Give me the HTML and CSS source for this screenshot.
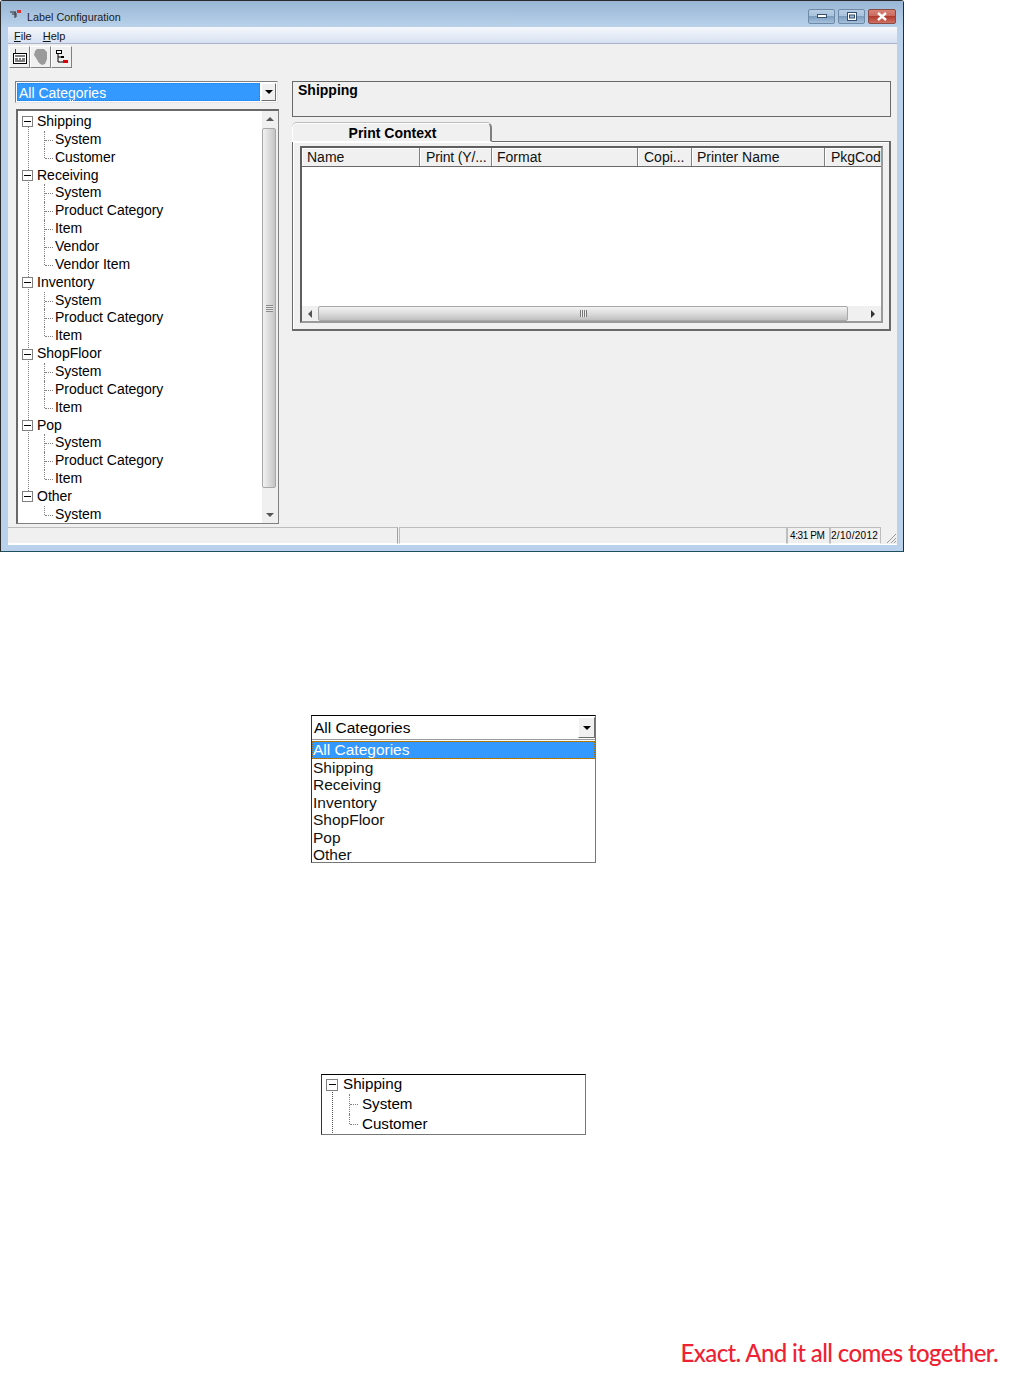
FILE: index.html
```html
<!DOCTYPE html>
<html lang="en">
<head>
  <meta charset="UTF-8" />
  <title>Label Configuration</title>
  <link rel="stylesheet" href="styles.css">
</head>
<body>
  <div class="window">
    <div class="titlebar">
      <svg class="app-icon" width="14" height="12" viewBox="0 0 14 12">
        <path d="M1 3h6M3 5h5M6 7h2M6 3v6" stroke="#333" fill="none"/>
        <path d="M8 1h4v3h-4z" fill="#d33"/>
      </svg>
      <span class="title">Label Configuration</span>
      <div class="win-buttons">
        <div class="win-btn">
          <svg width="10" height="5" viewBox="0 0 10 5"><rect x="0.5" y="0.5" width="9" height="3" fill="#fff" stroke="#35506e"/></svg>
        </div>
        <div class="win-btn">
          <svg width="10" height="9" viewBox="0 0 10 9"><rect x="0.5" y="0.5" width="9" height="8" fill="#fff" stroke="#35506e"/><rect x="2.5" y="3" width="5" height="3" fill="#9db9d6" stroke="#35506e"/></svg>
        </div>
        <div class="win-btn close">
          <svg width="12" height="9" viewBox="0 0 12 9"><path d="M2 1l8 7M10 1l-8 7" stroke="#fff" stroke-width="2.4"/></svg>
        </div>
      </div>
    </div>

    <div class="client">
      <div class="menubar"><span><u>F</u>ile</span><span><u>H</u>elp</span></div>

      <div class="toolbar">
        <div class="tool">
          <svg width="16" height="16" viewBox="0 0 16 16">
            <path d="M3.5 0v5h4" stroke="#d00" fill="none"/>
            <rect x="1.5" y="4.5" width="13" height="10" fill="#fff" stroke="#000"/>
            <path d="M3 7h10M3 10h3M7 10h2M10 10h3M3 12h10" stroke="#000" stroke-width="1.2"/>
          </svg>
        </div>
        <div class="tool">
          <svg width="16" height="18" viewBox="0 0 16 18">
            <path d="M4 1h7l3 3v7l-2 5-3 1-3-2-3-5-2-3 1-4z" fill="#9a9a9a"/>
          </svg>
        </div>
        <div class="tool">
          <svg width="16" height="16" viewBox="0 0 16 16">
            <path d="M4 3v10M4 8h4M4 13h5" stroke="#000"/>
            <rect x="2.5" y="1.5" width="5" height="3" fill="#fff" stroke="#000"/>
            <rect x="7" y="7" width="3" height="2" fill="#000"/>
            <rect x="9" y="11" width="5" height="3" fill="#d00"/>
          </svg>
        </div>
      </div>

      <div class="main">
        <div class="left">
          <div class="combo">
            <div class="combo-value">All Categories</div>
            <div class="arrow-btn"><i class="caret"></i></div>
          </div>
          <div class="tree-box">
            <ul class="tree">
              <li class="root"><div class="row"><i class="minus"></i>Shipping</div>
                <ul><li>System</li><li>Customer</li></ul></li>
              <li class="root"><div class="row"><i class="minus"></i>Receiving</div>
                <ul><li>System</li><li>Product Category</li><li>Item</li><li>Vendor</li><li>Vendor Item</li></ul></li>
              <li class="root"><div class="row"><i class="minus"></i>Inventory</div>
                <ul><li>System</li><li>Product Category</li><li>Item</li></ul></li>
              <li class="root"><div class="row"><i class="minus"></i>ShopFloor</div>
                <ul><li>System</li><li>Product Category</li><li>Item</li></ul></li>
              <li class="root"><div class="row"><i class="minus"></i>Pop</div>
                <ul><li>System</li><li>Product Category</li><li>Item</li></ul></li>
              <li class="root"><div class="row"><i class="minus"></i>Other</div>
                <ul><li>System</li></ul></li>
            </ul>
            <div class="vscroll">
              <div class="sb-btn"><i class="tri-up"></i></div>
              <div class="vthumb"><i class="grip-v"></i></div>
              <div class="sb-btn"><i class="tri-down"></i></div>
            </div>
          </div>
        </div>

        <div class="right">
          <div class="info-box">Shipping</div>
          <div class="tab-strip"><div class="tab">Print Context</div></div>
          <div class="tab-panel">
            <div class="listview">
              <div class="list-head">
                <div class="col c-name">Name</div>
                <div class="col c-print">Print (Y/...</div>
                <div class="col c-format">Format</div>
                <div class="col c-copies">Copi...</div>
                <div class="col c-printer">Printer Name</div>
                <div class="col c-pkg">PkgCod</div>
              </div>
              <div class="list-body"></div>
              <div class="hscroll">
                <div class="sb-btn"><i class="tri-left"></i></div>
                <div class="hthumb"><i class="grip-h"></i></div>
                <div class="sb-btn"><i class="tri-right"></i></div>
              </div>
            </div>
          </div>
        </div>
      </div>

      <div class="statusbar">
        <div class="panel p-a"></div>
        <div class="panel p-b"></div>
        <div class="panel p-time">4:31 PM</div>
        <div class="panel p-date">2/10/2012</div>
        <svg class="size-grip" width="12" height="12" viewBox="0 0 12 12">
          <path d="M11 2L2 11M11 6L6 11M11 9L9 11" stroke="#999" fill="none"/>
        </svg>
      </div>
    </div>
  </div>

  <div class="demo-combo">
    <div class="demo-top">
      <div class="demo-value">All Categories</div>
      <div class="arrow-btn"><i class="caret"></i></div>
    </div>
    <ul class="demo-list">
      <li class="selected">All Categories</li>
      <li>Shipping</li>
      <li>Receiving</li>
      <li>Inventory</li>
      <li>ShopFloor</li>
      <li>Pop</li>
      <li>Other</li>
    </ul>
  </div>

  <div class="demo-tree">
    <ul class="tree big">
      <li class="root"><div class="row"><i class="minus"></i>Shipping</div>
        <ul><li>System</li><li>Customer</li></ul></li>
    </ul>
  </div>

  <p class="tagline">Exact. And it all comes together.</p>
</body>
</html>
```

FILE: styles.css
```css
* {
  margin: 0;
  padding: 0;
  box-sizing: border-box;
}

body {
  background: #fff;
  color: #000;
  font-family: "Liberation Sans", Arial, sans-serif;
  font-size: 14px;
  width: 1010px;
  height: 1374px;
  overflow: hidden;
}

ul {
  list-style: none;
}

i {
  display: block;
}

/* window frame */
.window {
  width: 904px;
  height: 552px;
  background: #b9d1ea;
  border: 1px solid #2b2b2b;
  border-bottom-color: #1d4f5f;
  border-radius: 3px 3px 0 0;
  padding: 0 6px 6px 7px;
  display: flex;
  flex-direction: column;
}

.titlebar {
  height: 26px;
  margin: 0 -6px 0 -7px;
  padding: 0 7px 0 8px;
  display: flex;
  align-items: center;
  background: linear-gradient(#98b6d5, #b9d1ea);
  flex: none;
}

.app-icon {
  margin-right: 4px;
  margin-bottom: -1px;
}

.title {
  font-size: 10.8px;
  color: #1c1c1c;
  padding-top: 5px;
}

.win-buttons {
  margin-left: auto;
  display: flex;
  gap: 3px;
  align-self: flex-start;
  margin-top: 8px;
}

.win-btn {
  width: 27px;
  height: 15px;
  border: 1px solid #6f8aa6;
  border-radius: 2px;
  background: linear-gradient(#b7cde3 0, #a9c3de 45%, #7d9dbf 50%, #a5c0dc 100%);
  display: flex;
  align-items: center;
  justify-content: center;
}

.win-btn.close {
  width: 28px;
  background: linear-gradient(#d98377 0, #cc6a5f 45%, #b13b2e 50%, #cf6f62 100%);
  border-color: #8a4a44;
}

.client {
  flex: 1;
  background: #f0f0f0;
  display: flex;
  flex-direction: column;
  min-height: 0;
}

.menubar {
  height: 17px;
  background: linear-gradient(#f5f8fc, #d7e1f1);
  border-bottom: 1px solid #a9b4c8;
  font-size: 11px;
  display: flex;
  gap: 11px;
  padding: 3px 0 0 6px;
  color: #111;
  flex: none;
}

.toolbar {
  display: flex;
  padding: 2px 0 0 1px;
  height: 24px;
  flex: none;
}

.tool {
  width: 21px;
  height: 22px;
  background: #f0f0f0;
  border: 1px solid;
  border-color: #fff #808080 #808080 #fff;
  display: flex;
  align-items: center;
  justify-content: center;
}

.main {
  flex: 1;
  display: flex;
  padding: 13px 6px 0 7px;
  min-height: 0;
}

.left {
  width: 264px;
  flex: none;
}

/* combo */
.combo {
  width: 263px;
  height: 22px;
  background: #fff;
  border: 1px solid;
  border-color: #808080 #e4e4e4 #e4e4e4 #808080;
  display: flex;
  padding: 1px;
}

.combo-value {
  flex: 1;
  background: #3399ff;
  color: #fff;
  outline: 1px dotted #a36a00;
  outline-offset: -1px;
  line-height: 20px;
  padding-left: 2px;
}

.arrow-btn {
  width: 15px;
  margin-left: 1px;
  background: #f0f0f0;
  border: 1px solid;
  border-color: #fff #6e6e6e #6e6e6e #fff;
  display: flex;
  align-items: center;
  justify-content: center;
  flex: none;
}

.caret {
  border: 4px solid transparent;
  border-top: 4px solid #000;
  border-bottom-width: 0;
}

/* tree */
.tree-box {
  width: 263px;
  height: 415px;
  margin: 6px 0 0 1px;
  background: #fff;
  border: 2px solid;
  border-color: #696969 #808080 #808080 #696969;
  border-bottom-width: 1px;
  border-right-width: 1px;
  display: flex;
  overflow: hidden;
}

.tree {
  flex: 1;
  overflow: hidden;
  padding: 2px 0 0 4px;
  --row: 17.86px;
}

.root {
  position: relative;
}

.root:not(:last-child)::before {
  content: "";
  position: absolute;
  left: 6px;
  top: 9px;
  bottom: -9px;
  border-left: 1px dotted #808080;
}

.row {
  height: var(--row);
  line-height: var(--row);
  display: flex;
  align-items: center;
  position: relative;
  white-space: nowrap;
}

.minus {
  width: 11px;
  height: 11px;
  border: 1px solid #808080;
  background: linear-gradient(#000, #000) center / 7px 1px no-repeat #fff;
  margin-right: 4px;
  position: relative;
  z-index: 1;
  flex: none;
}

.tree ul {
  padding-left: 17px;
}

.tree ul li {
  height: var(--row);
  line-height: var(--row);
  padding-left: 17px;
  margin-left: -1px;
  position: relative;
  white-space: nowrap;
  letter-spacing: -0.04px;
}

.tree ul li::before {
  content: "";
  position: absolute;
  left: 6px;
  top: 0;
  bottom: 0;
  border-left: 1px dotted #808080;
}

.tree ul li:last-child::before {
  bottom: 50%;
}

.tree ul li::after {
  content: "";
  position: absolute;
  left: 7px;
  top: 50%;
  width: 8px;
  border-top: 1px dotted #808080;
}

/* scrollbars */
.vscroll {
  width: 16px;
  background: #f0f0f0;
  display: flex;
  flex-direction: column;
  flex: none;
}

.sb-btn {
  flex: none;
  width: 16px;
  height: 16px;
  display: flex;
  align-items: center;
  justify-content: center;
}

.vthumb {
  flex: 1;
  margin: 1px 2px 19px 0;
  background: linear-gradient(90deg, #f2f2f2, #dcdcdc 50%, #c4c4c4);
  border: 1px solid #a8a8a8;
  border-radius: 2px;
  display: flex;
  align-items: center;
  justify-content: center;
}

.grip-v {
  width: 7px;
  height: 7px;
  background: repeating-linear-gradient(#8a8a8a 0 1px, #e8e8e8 1px 2px);
}

.tri-up {
  border: 4px solid transparent;
  border-bottom: 4px solid #555;
  border-top-width: 0;
}

.tri-down {
  border: 4px solid transparent;
  border-top: 4px solid #555;
  border-bottom-width: 0;
}

.tri-left {
  border: 4px solid transparent;
  border-right: 4px solid #555;
  border-left-width: 0;
}

.tri-right {
  border: 4px solid transparent;
  border-left: 4px solid #333;
  border-right-width: 0;
}

/* right side */
.right {
  margin-left: 13px;
  width: 599px;
  flex: none;
}

.info-box {
  height: 36px;
  border: 1px solid #696969;
  font-weight: bold;
  padding: 0 0 0 5px;
  line-height: 17px;
}

.tab-strip {
  height: 19px;
  margin-top: 6px;
  display: flex;
  position: relative;
  z-index: 1;
}

.tab {
  width: 200px;
  height: 19px;
  background: #f0f0f0;
  border: 1px solid #fff;
  border-right: 2px solid #808080;
  border-radius: 5px 5px 0 0;
  box-shadow: 0 -1px 0 #bbb;
  font-weight: bold;
  text-align: center;
  line-height: 18px;
  padding-left: 2px;
}

.tab-panel {
  height: 190px;
  margin-top: -1px;
  border: 2px solid #696969;
  border-top-width: 1px;
  border-left-width: 1px;
  box-shadow: inset 1px 1px 0 #fff;
  padding: 4px 6px 6px 7px;
}

.listview {
  height: 100%;
  background: #fff;
  border: 2px solid #5f5f5f;
  border-right: 2px solid #9a9a9a;
  border-bottom: 2px solid #9a9a9a;
  display: flex;
  flex-direction: column;
  overflow: hidden;
}

.list-head {
  display: flex;
  height: 19px;
  background: #f0f0f0;
  border-bottom: 1px solid #696969;
  flex: none;
  overflow: hidden;
}

.col {
  border-right: 1px solid #808080;
  box-shadow: inset 1px 1px 0 #fff;
  padding-left: 5px;
  line-height: 19px;
  white-space: nowrap;
  overflow: hidden;
  color: #111;
  flex: none;
}

.c-name { width: 118px; }
.c-print { width: 72px; padding-left: 6px; letter-spacing: -0.15px; }
.c-format { width: 146px; }
.c-copies { width: 54px; padding-left: 6px; }
.c-printer { width: 133px; }
.c-pkg { width: 57px; border-right: 0; padding-left: 6px; }

.list-body {
  flex: 1;
}

.hscroll {
  height: 15px;
  background: #f0f0f0;
  display: flex;
  flex: none;
}

.hthumb {
  width: 530px;
  flex: none;
  background: linear-gradient(#f2f2f2, #dcdcdc 50%, #c0c0c0);
  border: 1px solid #a8a8a8;
  border-radius: 2px;
  display: flex;
  align-items: center;
  justify-content: center;
}

.grip-h {
  width: 7px;
  height: 7px;
  background: repeating-linear-gradient(90deg, #777 0 1px, #eee 1px 2px);
}

.hscroll .sb-btn:last-child {
  margin-left: 15px;
  width: 20px;
}

/* status bar */
.statusbar {
  height: 19px;
  display: flex;
  flex: none;
  font-size: 10px;
  position: relative;
  border-bottom: 1px solid #fff;
  padding-top: 1px;
}

.panel {
  border: 1px solid;
  border-color: #bdbdbd #e8e8e8 #fff #bdbdbd;
  border-right: 1px solid #bdbdbd;
  line-height: 16px;
  padding-left: 2px;
  white-space: nowrap;
  flex: none;
}

.p-a { width: 390px; border-left: 0; border-right-color: #a0a0a0; }
.p-b { width: 388px; margin-left: 1px; }
.p-time { width: 43px; letter-spacing: -0.4px; }
.p-date { width: 51px; padding-left: 0; letter-spacing: 0.3px; }

.size-grip {
  position: absolute;
  right: 0;
  bottom: 0;
}

/* lower callouts */
.demo-combo {
  width: 285px;
  height: 148px;
  margin: 163px 0 0 311px;
  border-top: 1px solid #000;
  border-left: 1px solid #333;
  border-right: 1px solid #777;
  border-bottom: 1px solid #777;
  font-size: 15.5px;
}

.demo-top {
  height: 24px;
  display: flex;
  padding: 1px 0 1px 2px;
  border-bottom: 1px solid #999;
}

.demo-value {
  flex: 1;
  line-height: 22px;
}

.demo-top .arrow-btn {
  width: 17px;
}

.demo-list li {
  height: 17.55px;
  line-height: 17.55px;
  padding-left: 1px;
  color: #111;
}

.demo-list li.selected {
  background: #3399ff;
  color: #fff;
  margin-top: 1px;
  outline: 1px dotted #a36a00;
  outline-offset: -1px;
}

.demo-tree {
  width: 265px;
  height: 61px;
  margin: 211px 0 0 321px;
  border: 1px solid #777;
  border-top-color: #000;
  border-left-color: #333;
  overflow: hidden;
}

.tree.big {
  --row: 20px;
  font-size: 15.2px;
  padding: 0 0 0 4px;
  margin-top: -1px;
}

.tree.big .minus {
  width: 12px;
  height: 12px;
  margin-right: 5px;
  margin-top: 1px;
}

.tree.big .root::before {
  content: "";
  position: absolute;
  left: 6px;
  top: 10px;
  bottom: -9px;
  border-left: 1px dotted #555;
}

.tree.big ul {
  padding-left: 18px;
}

.tree.big ul li {
  padding-left: 19px;
}

.tagline {
  margin-top: 203px;
  padding-right: 12px;
  text-align: right;
  font-family: Lato, sans-serif;
  font-size: 24px;
  font-weight: 500;
  letter-spacing: -0.62px;
  line-height: 30px;
  color: #ee2233;
}
```
